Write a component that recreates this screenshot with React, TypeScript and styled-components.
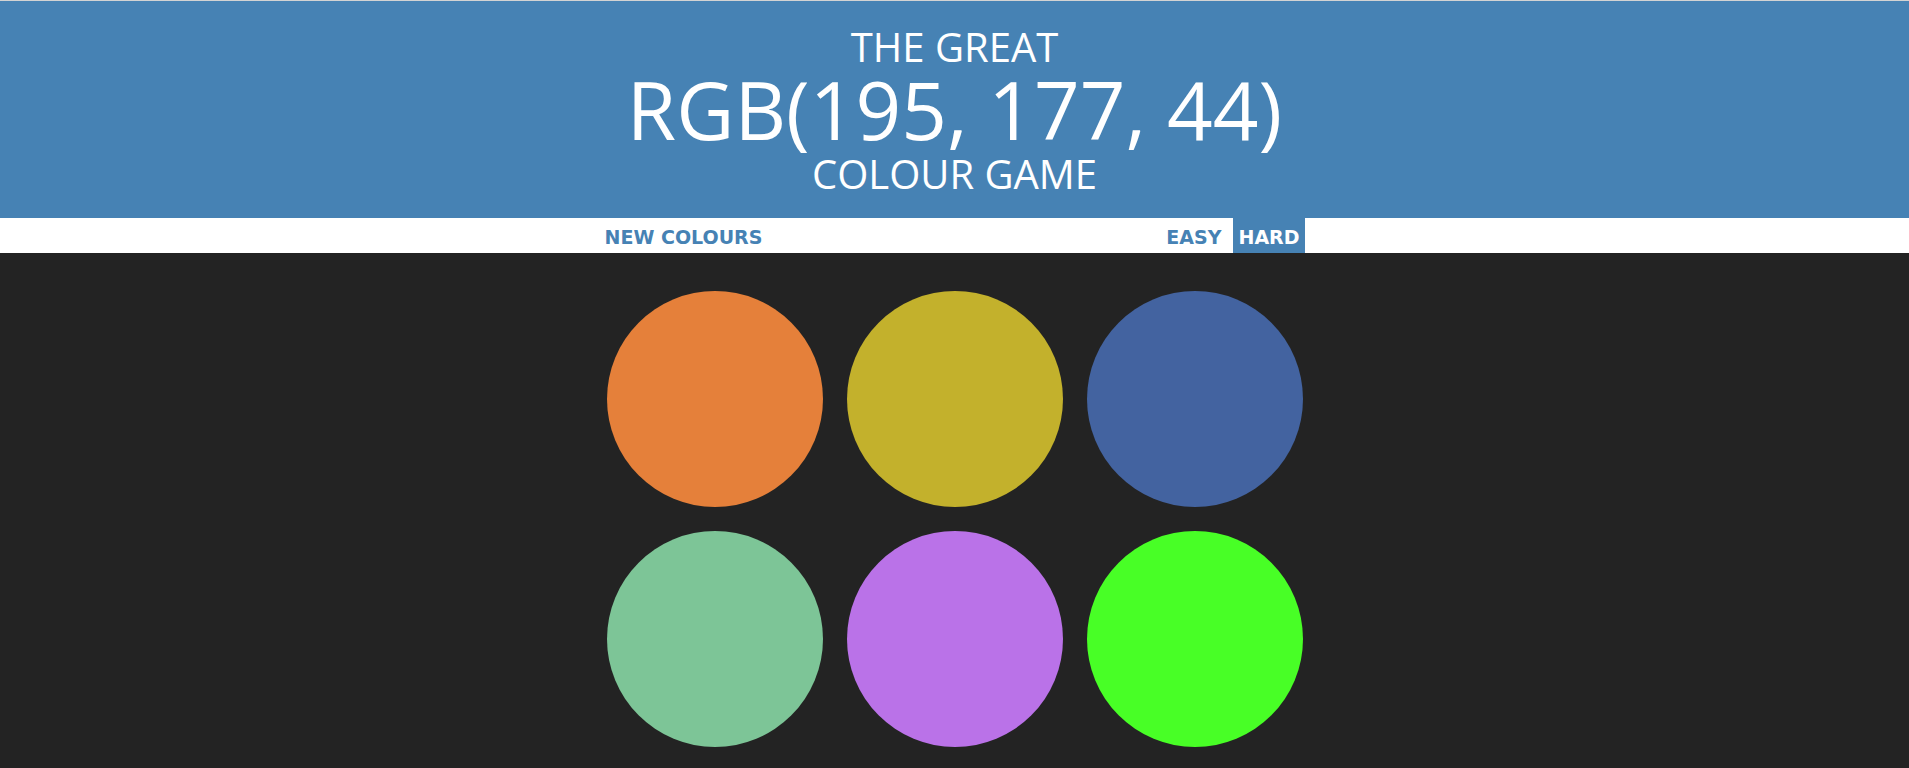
import React, { useState } from "react";
import styled, { createGlobalStyle } from "styled-components";

const GlobalStyle = createGlobalStyle`
  html, body {
    margin: 0;
    padding: 0;
    background: #232323;
  }
  body {
    border-top: 1px solid #d3d3d3;
  }
`;

const Header = styled.h1`
  margin: 0;
  padding: 24px 0 19px;
  background: #4682b4;
  color: #ffffff;
  text-align: center;
  text-transform: uppercase;
  font-family: "Open Sans", sans-serif;
  font-weight: 400;
  font-size: 40px;
`;

const Line = styled.span<{ $h: number }>`
  display: block;
  height: ${(p) => p.$h}px;
  line-height: ${(p) => p.$h}px;
`;

const ColorDisplay = styled.span`
  display: block;
  height: 80px;
  line-height: 80px;
  font-size: 80px;
`;

const Stripe = styled.div`
  background: #ffffff;
  height: 35px;
`;

const StripeInner = styled.div`
  max-width: 700px;
  height: 100%;
  margin: 0 auto;
  display: flex;
  align-items: stretch;
`;

const Message = styled.span`
  flex: 1;
`;

const ModeGroup = styled.div`
  display: flex;
  align-items: stretch;
  gap: 7px;
`;

const NavButton = styled.button<{ $selected?: boolean; $flush?: boolean }>`
  border: none;
  outline: none;
  margin: 0;
  height: 100%;
  padding: 2px ${(p) => (p.$flush ? "0" : "5px")} 0;
  background: ${(p) => (p.$selected ? "#4682b4" : "transparent")};
  color: ${(p) => (p.$selected ? "#ffffff" : "#4682b4")};
  font-family: "DejaVu Sans", Verdana, sans-serif;
  font-weight: 700;
  font-size: 19px;
  letter-spacing: 0;
  text-transform: uppercase;
  cursor: pointer;
`;

const Board = styled.div`
  width: 720px;
  box-sizing: border-box;
  margin: 26px auto 0;
  padding: 12px;
  display: grid;
  grid-template-columns: repeat(3, 216px);
  gap: 24px;
`;

const Square = styled.div<{ $color: string }>`
  width: 216px;
  height: 216px;
  border-radius: 50%;
  background: ${(p) => p.$color};
`;

const colors = [
  "rgb(229, 128, 58)",
  "rgb(195, 177, 44)",
  "rgb(67, 99, 160)",
  "rgb(125, 197, 151)",
  "rgb(186, 114, 232)",
  "rgb(72, 255, 38)",
];

export default function App() {
  const [hard, setHard] = useState(true);
  return (
    <>
      <GlobalStyle />
      <Header>
        <Line $h={44}>The Great</Line>
        <ColorDisplay>RGB(195, 177, 44)</ColorDisplay>
        <Line $h={50}>Colour Game</Line>
      </Header>
      <Stripe>
        <StripeInner>
          <NavButton $flush>New Colours</NavButton>
          <Message />
          <ModeGroup>
            <NavButton $selected={!hard} onClick={() => setHard(false)}>
              Easy
            </NavButton>
            <NavButton $selected={hard} onClick={() => setHard(true)}>
              Hard
            </NavButton>
          </ModeGroup>
        </StripeInner>
      </Stripe>
      <Board>
        {colors.map((c) => (
          <Square key={c} $color={c} />
        ))}
      </Board>
    </>
  );
}
